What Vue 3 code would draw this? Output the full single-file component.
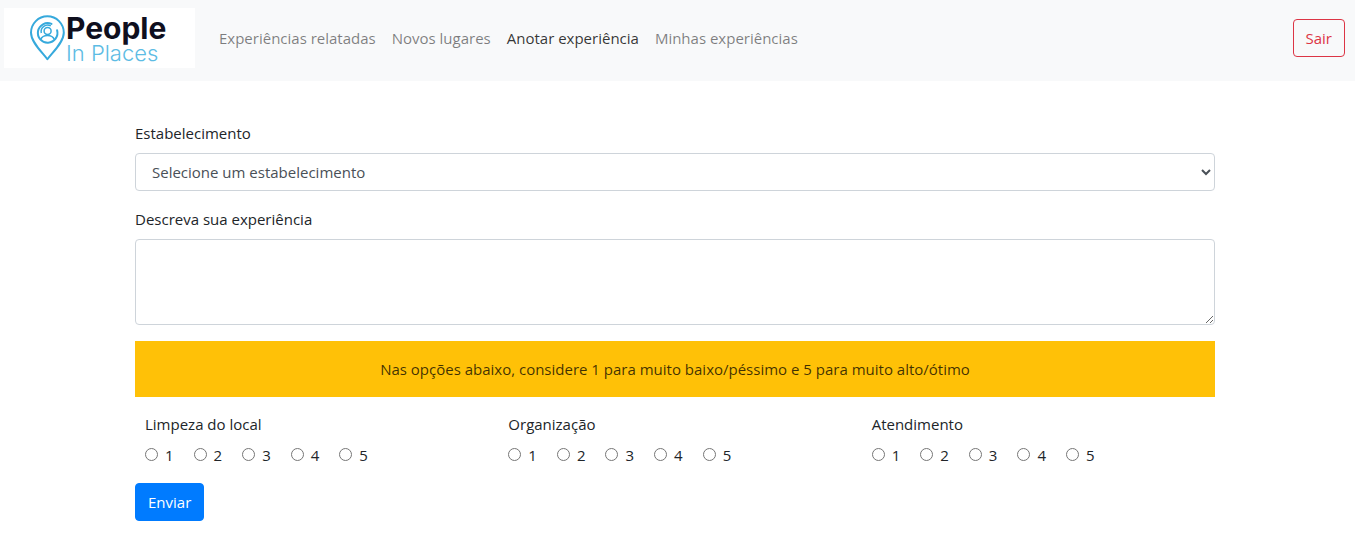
<script setup>
import { reactive, ref } from 'vue'

const links = [
  { label: 'Experiências relatadas', active: false },
  { label: 'Novos lugares', active: false },
  { label: 'Anotar experiência', active: true },
  { label: 'Minhas experiências', active: false },
]

const groups = [
  { key: 'limpeza', label: 'Limpeza do local' },
  { key: 'organizacao', label: 'Organização' },
  { key: 'atendimento', label: 'Atendimento' },
]

const place = ref('')
const description = ref('')
const ratings = reactive({ limpeza: null, organizacao: null, atendimento: null })
</script>

<template>
  <div class="page">
    <nav class="navbar">
      <a class="brand" href="#" aria-label="People In Places">
        <svg width="191" height="60" viewBox="0 0 191 60">
          <g fill="none" stroke="#36a9dc" stroke-width="2">
            <path d="M43.400 51.300 C39 45 27 34.500 27 24.700 A16.400 16.400 0 0 1 59.800 24.700 C59.800 34.500 47.800 45 43.400 51.300 Z" stroke-linejoin="round" />
            <path d="M47.500 15.900 A9.800 9.800 0 1 0 53.100 22.300" stroke-linecap="round" />
            <path d="M37.300 25 A6.500 6.500 0 0 1 46.800 17.900" stroke-width="1.500" />
            <circle cx="43.600" cy="22.900" r="3.500" stroke-width="1.500" />
            <path d="M36.700 31.500 C37.800 28.600 40 27.500 43.500 27.500 C47 27.500 49.200 28.600 50.300 31.500" stroke-width="1.600" />
          </g>
          <text class="brand-top" x="62" y="31">People</text>
          <text class="brand-bottom" x="62" y="53">In Places</text>
        </svg>
      </a>
      <ul class="nav-links">
        <li v-for="link in links" :key="link.label">
          <a href="#" :class="{ active: link.active }">{{ link.label }}</a>
        </li>
      </ul>
      <button type="button" class="btn btn-exit">Sair</button>
    </nav>

    <form class="form" @submit.prevent>
      <div class="field">
        <label for="place">Estabelecimento</label>
        <select id="place" v-model="place" class="control select">
          <option value="">Selecione um estabelecimento</option>
        </select>
      </div>
      <div class="field">
        <label for="description">Descreva sua experiência</label>
        <textarea id="description" v-model="description" class="control area" rows="3"></textarea>
      </div>
      <p class="notice">Nas opções abaixo, considere 1 para muito baixo/péssimo e 5 para muito alto/ótimo</p>
      <div class="groups">
        <fieldset v-for="group in groups" :key="group.key">
          <legend>{{ group.label }}</legend>
          <div class="options">
            <label v-for="n in 5" :key="n" class="option">
              <input v-model="ratings[group.key]" type="radio" :name="group.key" :value="n" />
              <span>{{ n }}</span>
            </label>
          </div>
        </fieldset>
      </div>
      <button type="submit" class="btn btn-send">Enviar</button>
    </form>
  </div>
</template>

<style>
body {
  margin: 0;
  background: #fff;
}
</style>

<style scoped>
.page,
.page * {
  box-sizing: border-box;
}
.page {
  font-family: "Open Sans", "Noto Sans", sans-serif;
  font-size: 15px;
  font-weight: 400;
  line-height: 24px;
  color: #212529;
}
.navbar {
  display: flex;
  align-items: center;
  padding: 8px 10px 13px 4px;
  background: #f8f9fa;
}
.brand {
  display: block;
  background: #fff;
  margin-right: 16px;
}
.brand svg {
  display: block;
}
.brand-top {
  font-family: Inter, sans-serif;
  font-size: 30px;
  font-weight: 700;
  fill: #0f0f1e;
}
.brand-bottom {
  font-family: Inter, sans-serif;
  font-size: 22px;
  font-weight: 300;
  fill: #5dbce4;
}
.nav-links {
  display: flex;
  flex: 1;
  margin: 0;
  padding: 0;
  list-style: none;
}
.nav-links a {
  display: block;
  padding: 8px;
  color: rgba(0, 0, 0, 0.5);
  text-decoration: none;
}
.nav-links a.active {
  color: rgba(0, 0, 0, 0.8);
}
.btn {
  height: 38px;
  padding: 0 12px;
  border: 1px solid transparent;
  border-radius: 4px;
  font: inherit;
  cursor: pointer;
}
.btn-exit {
  border-color: #dc3545;
  background: transparent;
  color: #dc3545;
}
.btn-send {
  border-color: #007bff;
  background: #007bff;
  color: #fff;
}
.form {
  padding: 40px 140px 28px 135px;
}
.field {
  margin-bottom: 16px;
}
.field label {
  display: block;
  margin-bottom: 8px;
}
.control {
  display: block;
  width: 100%;
  border: 1px solid #ced4da;
  border-radius: 4px;
  background: #fff;
  font: inherit;
  color: #495057;
}
.select {
  height: 38px;
  padding: 0 1px 0 12px;
}
.area {
  height: 86px;
  padding: 6px 12px;
  resize: vertical;
}
.notice {
  margin: 0 0 15px;
  padding: 16px;
  background: #ffc107;
  color: rgba(0, 0, 0, 0.75);
  text-align: center;
}
.groups {
  display: grid;
  grid-template-columns: repeat(3, 1fr);
  gap: 20px;
  margin-bottom: 16px;
  padding-left: 10px;
}
fieldset {
  min-width: 0;
  margin: 0;
  padding: 0;
  border: 0;
}
legend {
  margin-bottom: 7px;
  padding: 0;
}
.options {
  display: flex;
  gap: 20px;
}
.option {
  display: flex;
  align-items: center;
  gap: 7px;
}
.option input {
  width: 13px;
  height: 13px;
  margin: 0 0 2px;
}
</style>
